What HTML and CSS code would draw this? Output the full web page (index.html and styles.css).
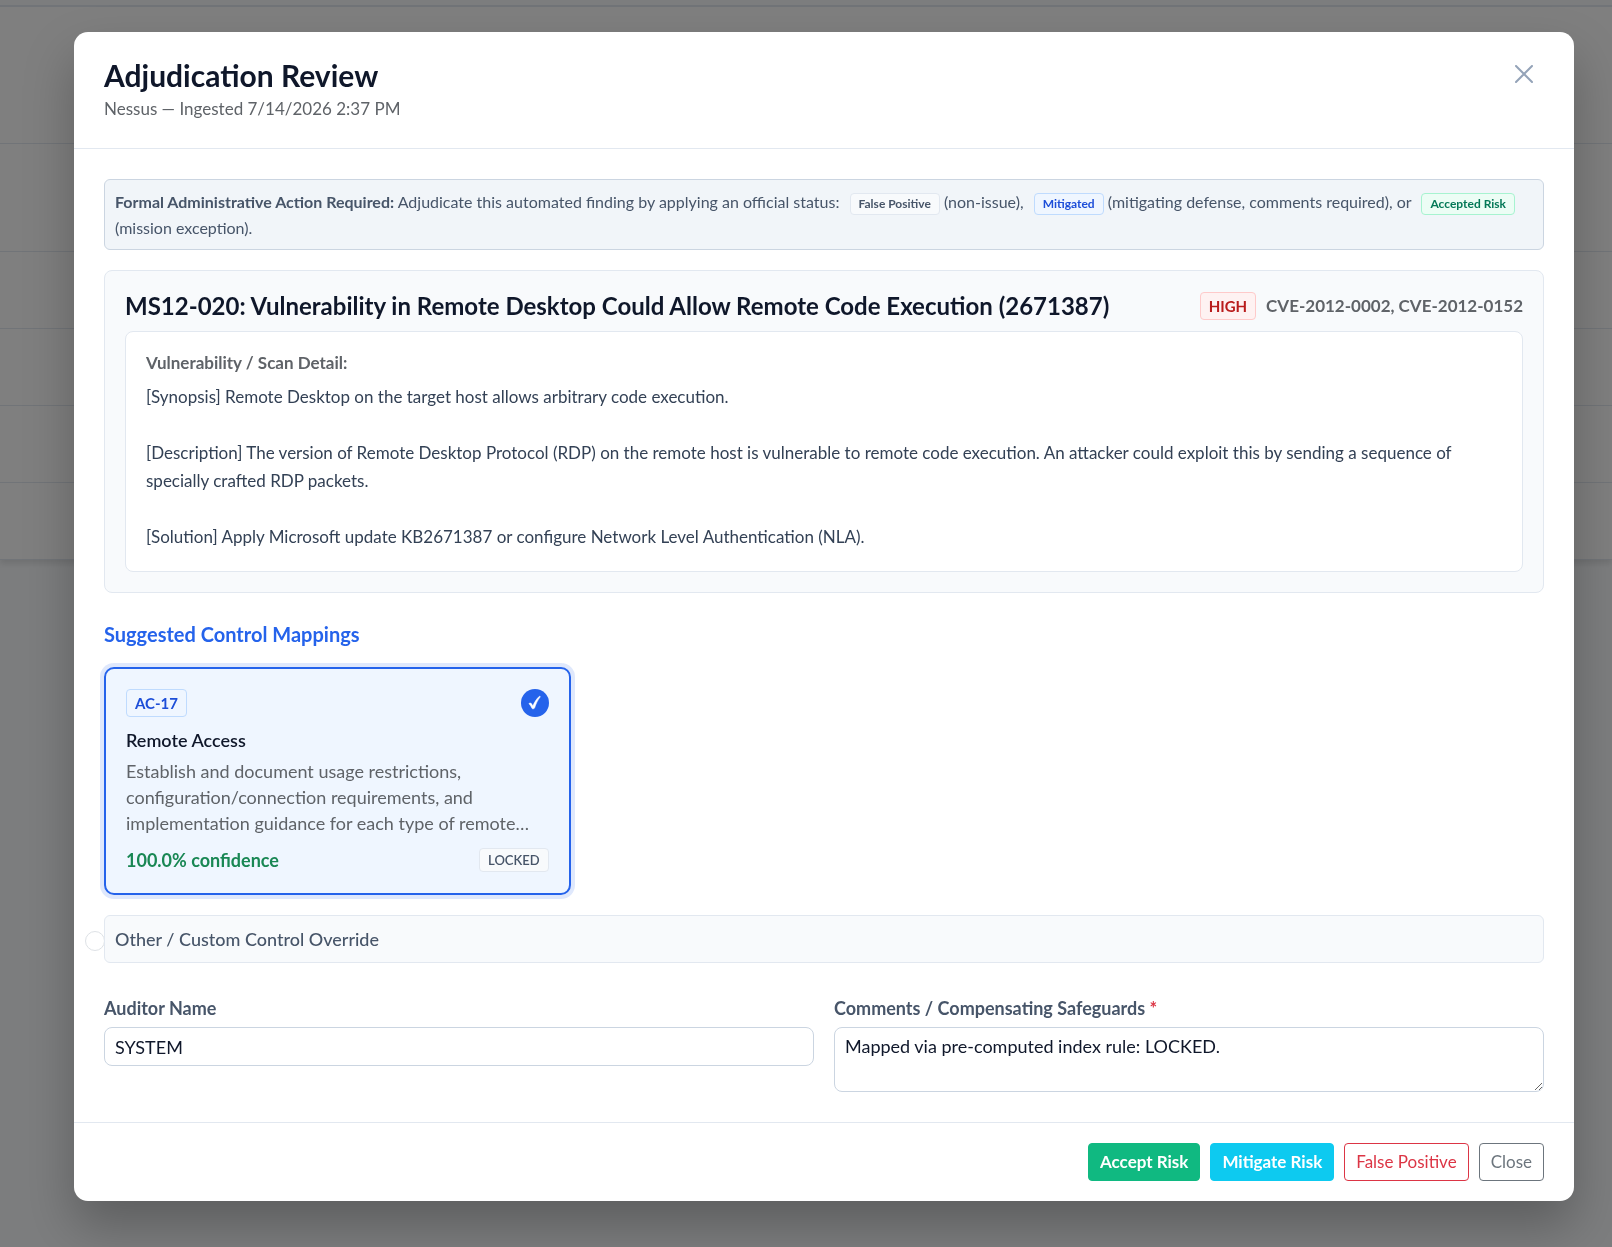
FILE: index.html
```html
<!DOCTYPE html>
<html lang="en">
  <head>
    <meta charset="UTF-8" />
    <meta name="viewport" content="width=device-width, initial-scale=1.0" />
    <title>Adjudication Review</title>
    <link rel="stylesheet" href="styles.css">
  </head>
  <body>
    <div class="page" aria-hidden="true">
      <div class="queue">
        <div class="queue-row queue-head"></div>
        <div class="queue-row queue-tall"></div>
        <div class="queue-row"></div>
        <div class="queue-row"></div>
        <div class="queue-row"></div>
        <div class="queue-row"></div>
      </div>
    </div>

    <div class="overlay">
      <div class="modal" role="dialog" aria-labelledby="modal-title">
        <header class="modal-header">
          <div>
            <h1 id="modal-title">Adjudication Review</h1>
            <p class="subtitle">Nessus — Ingested 7/14/2026 2:37 PM</p>
          </div>
          <button class="btn-x" type="button" aria-label="Close dialog">
            <svg width="18" height="18" viewBox="0 0 18 18" fill="none" stroke="currentColor" stroke-width="2" stroke-linecap="round">
              <path d="M1 1l16 16M17 1L1 17" />
            </svg>
          </button>
        </header>

        <div class="modal-body">
          <div class="notice">
            <strong>Formal Administrative Action Required:</strong>
            Adjudicate this automated finding by applying an official status:
            <span class="badge badge-sm badge-gray">False Positive</span>
            (non-issue),
            <span class="badge badge-sm badge-blue">Mitigated</span>
            (mitigating defense, comments required), or
            <span class="badge badge-sm badge-green">Accepted Risk</span>
            (mission exception).
          </div>

          <section class="finding">
            <div class="finding-head">
              <h2>MS12-020: Vulnerability in Remote Desktop Could Allow Remote Code Execution (2671387)</h2>
              <div class="finding-meta">
                <span class="badge badge-red">HIGH</span>
                <span class="cve">CVE-2012-0002, CVE-2012-0152</span>
              </div>
            </div>
            <div class="detail">
              <h3>Vulnerability / Scan Detail:</h3>
              <div class="detail-text">[Synopsis] Remote Desktop on the target host allows arbitrary code execution.

[Description] The version of Remote Desktop Protocol (RDP) on the remote host is vulnerable to remote code execution. An attacker could exploit this by sending a sequence of specially crafted RDP packets.

[Solution] Apply Microsoft update KB2671387 or configure Network Level Authentication (NLA).</div>
            </div>
          </section>

          <h2 class="section-title">Suggested Control Mappings</h2>
          <div class="controls">
            <label class="control-card">
              <input class="sr-only" type="radio" name="control" value="AC-17" checked />
              <span class="card-row">
                <span class="badge badge-blue">AC-17</span>
                <svg class="check" width="28" height="28" viewBox="0 0 28 28">
                  <circle cx="14" cy="14" r="14" fill="#2563eb" />
                  <path d="M8.3 14.2c1-.4 2-.1 2.5.9l1 2c1.6-3.9 3.6-7 6.3-9.6.5-.4 1.4-.2 1.2.3-2.6 3.4-4.4 7-5.7 11.2-.3.9-2.3 1.1-2.7.3-.7-1.7-1.5-3.2-2.7-4.3-.3-.3-.2-.7.1-.8z" fill="#fff" stroke="#fff" stroke-width=".5" />
                </svg>
              </span>
              <span class="card-title">Remote Access</span>
              <span class="card-text">Establish and document usage restrictions, configuration/connection requirements, and implementation guidance for each type of remote…</span>
              <span class="card-row">
                <span class="confidence">100.0% confidence</span>
                <span class="badge badge-sm badge-gray badge-lock">LOCKED</span>
              </span>
            </label>
          </div>

          <div class="override">
            <input class="override-radio" type="radio" name="control" id="override" value="custom" />
            <label class="override-label" for="override">Other / Custom Control Override</label>
          </div>

          <div class="form">
            <div class="field">
              <label for="auditor">Auditor Name</label>
              <input type="text" id="auditor" value="SYSTEM" />
            </div>
            <div class="field">
              <label for="comments">Comments / Compensating Safeguards <span class="required">*</span></label>
              <textarea id="comments" rows="2">Mapped via pre-computed index rule: LOCKED.</textarea>
            </div>
          </div>
        </div>

        <footer class="modal-footer">
          <button class="btn btn-accept" type="button">Accept Risk</button>
          <button class="btn btn-mitigate" type="button">Mitigate Risk</button>
          <button class="btn btn-false" type="button">False Positive</button>
          <button class="btn btn-close" type="button">Close</button>
        </footer>
      </div>
    </div>
  </body>
</html>
```
FILE: styles.css
```css
* {
  box-sizing: border-box;
}

body {
  margin: 0;
  min-height: 100vh;
  background: #f8fafc;
  color: #0f172a;
  font-family: Lato, "Open Sans", sans-serif;
  font-size: 18px;
  line-height: 26px;
  overflow: hidden;
}

h1,
h2,
h3,
p {
  margin: 0;
}

/* page behind the dialog */
.page {
  position: fixed;
  inset: 0;
  padding-top: 5px;
}

.queue {
  background: #fff;
  border-top: 2px solid #e2e8f0;
  box-shadow: 0 4px 6px rgba(0, 0, 0, 0.1);
}

.queue-row {
  height: 77px;
  border-bottom: 1px solid #e2e8f0;
}

.queue-head {
  height: 137px;
}

.queue-tall {
  height: 108px;
}

.overlay {
  position: fixed;
  inset: 0;
  padding: 32px 38px 32px 74px;
  background: rgba(0, 0, 0, 0.5);
  overflow: auto;
}

.modal {
  background: #fff;
  border-radius: 14px;
  box-shadow: 0 25px 50px rgba(0, 0, 0, 0.25);
}

.modal-header {
  display: flex;
  justify-content: space-between;
  align-items: flex-start;
  padding: 23px 30px 25px;
  border-bottom: 1px solid #e2e8f0;
}

h1 {
  font-size: 30px;
  line-height: 40px;
  font-weight: 700;
}

.subtitle {
  color: #5f6368;
  font-size: 17px;
  line-height: 28px;
}

.btn-x {
  display: flex;
  margin-top: 10px;
  padding: 0 11px;
  border: 0;
  background: none;
  color: #94a3b8;
  cursor: pointer;
}

.modal-body {
  padding: 30px;
}

.notice {
  padding: 9px 10px;
  border: 1px solid #cbd5e1;
  border-radius: 6px;
  background: #f1f5f9;
  color: #475569;
  font-size: 16px;
  line-height: 25px;
}

.badge {
  display: inline-block;
  padding: 0 8px;
  border: 1px solid;
  border-radius: 4px;
  font-size: 15px;
  line-height: 26px;
  font-weight: 700;
}

.badge-sm {
  padding: 0 8px;
  font-size: 12px;
  line-height: 20px;
}

.notice .badge {
  margin-left: 6px;
}

.badge-lock {
  font-size: 13px;
  line-height: 22px;
  font-weight: 600;
}

.badge-gray {
  border-color: #e2e8f0;
  background: #f8fafc;
  color: #475569;
}

.badge-blue {
  border-color: #bfdbfe;
  background: #eff6ff;
  color: #1d4ed8;
}

.badge-green {
  border-color: #a7f3d0;
  background: #ecfdf5;
  color: #047857;
}

.badge-red {
  border-color: #fecaca;
  background: #fef2f2;
  color: #b91c1c;
}

.finding {
  margin-top: 20px;
  padding: 20px;
  border: 1px solid #e2e8f0;
  border-radius: 8px;
  background: #f8fafc;
}

.finding-head {
  display: flex;
  justify-content: space-between;
  align-items: center;
  gap: 20px;
  margin-bottom: 10px;
}

.finding-head h2 {
  font-size: 24px;
  line-height: 30px;
  font-weight: 700;
}

.finding-meta {
  display: flex;
  align-items: center;
  gap: 10px;
  white-space: nowrap;
}

.cve {
  color: #5f6368;
  font-size: 17px;
  font-weight: 700;
}

.detail {
  padding: 20px;
  border: 1px solid #e2e8f0;
  border-radius: 8px;
  background: #fff;
}

.detail h3 {
  margin-bottom: 9px;
  color: #5f6368;
  font-size: 17px;
  line-height: 22px;
  font-weight: 700;
}

.detail-text {
  color: #334155;
  font-size: 17px;
  line-height: 28px;
  white-space: pre-wrap;
}

.section-title {
  margin: 28px 0 20px;
  color: #2563eb;
  font-size: 20px;
  font-weight: 700;
}

.controls {
  display: grid;
  grid-template-columns: repeat(3, 1fr);
  gap: 20px;
}

.control-card {
  display: flex;
  flex-direction: column;
  padding: 20px;
  border: 2px solid #2563eb;
  border-radius: 10px;
  background: #eff6ff;
  box-shadow: 0 0 0 4px rgba(37, 99, 235, 0.15);
  cursor: pointer;
}

.sr-only {
  position: absolute;
  width: 1px;
  height: 1px;
  margin: 0;
  opacity: 0;
}

.card-row {
  display: flex;
  justify-content: space-between;
  align-items: center;
}

.card-title {
  margin: 10px 0 5px;
  font-weight: 600;
}

.card-text {
  margin-bottom: 11px;
  color: #5f6368;
}

.confidence {
  color: #198754;
  font-weight: 700;
}

.override {
  display: flex;
  align-items: center;
  margin: 20px 0 32px -19px;
}

.override-radio {
  appearance: none;
  flex: none;
  width: 20px;
  height: 20px;
  margin: 4px -1px 0 0;
  border: 1px solid #dee2e6;
  border-radius: 50%;
  background: #fff;
}

.override-label {
  flex: 1;
  padding: 10px;
  border: 1px solid #e2e8f0;
  border-radius: 6px;
  background: #f8fafc;
  color: #475569;
  font-weight: 500;
}

.form {
  display: grid;
  grid-template-columns: 1fr 1fr;
  gap: 20px;
}

.field {
  display: flex;
  flex-direction: column;
  align-items: stretch;
  gap: 6px;
}

.field label {
  color: #475569;
  font-weight: 700;
}

.field .required {
  color: #dc3545;
}

.field input,
.field textarea {
  display: block;
  width: 100%;
  margin: 0;
  padding: 5px 10px;
  border: 1px solid #cbd5e1;
  border-radius: 8px;
  background: #fff;
  color: #0f172a;
  font: inherit;
}

.field input {
  height: 39px;
}

.field textarea {
  height: 65px;
  resize: vertical;
}

.modal-footer {
  display: flex;
  justify-content: flex-end;
  gap: 10px;
  padding: 20px 30px;
  border-top: 1px solid #e2e8f0;
}

.btn {
  padding: 5px 11px;
  border: 1px solid;
  border-radius: 4px;
  background: #fff;
  font-family: inherit;
  font-size: 17px;
  line-height: 26px;
  cursor: pointer;
}

.btn-accept {
  border-color: #10b981;
  background: #10b981;
  color: #fff;
  font-weight: 700;
}

.btn-mitigate {
  border-color: #0dcaf0;
  background: #0dcaf0;
  color: #fff;
  font-weight: 700;
}

.btn-false {
  border-color: #dc3545;
  color: #dc3545;
}

.btn-close {
  border-color: #6c757d;
  color: #6c757d;
}
```
